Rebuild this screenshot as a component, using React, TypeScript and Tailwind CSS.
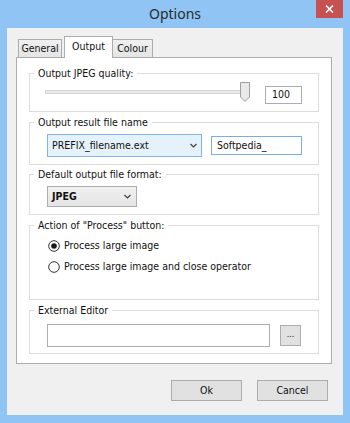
import React from 'react'

const Chevron = () => (
  <svg width="7" height="5" viewBox="0 0 7 5">
    <path d="M0.5 1L3.5 4L6.5 1" fill="none" stroke="#404040" strokeWidth="1.2" />
  </svg>
)

const Radio = ({ checked }: { checked?: boolean }) => (
  <svg width="12" height="12" viewBox="0 0 12 12">
    <circle cx="6" cy="6" r="5.3" fill="#fff" stroke="#333" strokeWidth="1" />
    {checked && <circle cx="6" cy="6" r="2.8" fill="#1a1a1a" />}
  </svg>
)

const Group = ({
  label,
  className,
  children,
}: {
  label: string
  className?: string
  children?: React.ReactNode
}) => (
  <fieldset className={`border border-[#dcdcdc] ${className ?? ''}`}>
    <legend className="ml-[4px] px-[4px] leading-[14px]">{label}</legend>
    {children}
  </fieldset>
)

export default function App() {
  return (
    <div className="w-[350px] h-[423px] bg-[#8fc4f4] flex flex-col font-['DejaVu_Sans_Condensed','Liberation_Sans',Arial,sans-serif] text-[10.5px] text-[#111]">
      {/* title bar */}
      <div className="h-[28px] relative flex items-center justify-center">
        <span className="font-['Noto_Sans',sans-serif] text-[14px] text-[#2b2b2b] leading-none">
          Options
        </span>
        <div className="absolute right-[7px] top-0 w-[27px] h-[18px] bg-[#c75050] flex items-center justify-center">
          <svg width="9" height="8" viewBox="0 0 9 8">
            <path d="M1 0.5L8 7.5M8 0.5L1 7.5" stroke="#fff" strokeWidth="1.6" />
          </svg>
        </div>
      </div>

      {/* client area */}
      <div className="mx-[7px] h-[387px] bg-[#f0f0f0] flex flex-col">
        <div className="flex items-end h-[21px] mt-[8px] ml-[9px]">
          <div className="ml-[2px] w-[44px] h-[18px] border border-b-0 border-[#acacac] bg-gradient-to-b from-[#f0f0f0] to-[#e5e5e5] flex items-center justify-center">
            General
          </div>
          <div className="relative z-10 ml-[2px] -mb-[1px] w-[49px] h-[22px] border border-b-0 border-[#acacac] bg-white flex items-center justify-center pb-[2px]">
            Output
          </div>
          <div className="-ml-[1px] w-[41px] h-[18px] border border-b-0 border-[#acacac] bg-gradient-to-b from-[#f0f0f0] to-[#e5e5e5] flex items-center justify-center">
            Colour
          </div>
        </div>

        <div className="ml-[9px] w-[316px] h-[307px] bg-white border border-[#acacac] px-[12px] pt-[8px] flex flex-col">
          <Group label="Output JPEG quality:" className="h-[46px]">
            <div className="flex items-start pl-[15px]">
              <div className="relative w-[205px] h-[20px] mt-[2px]">
                <div className="absolute left-0 right-[4px] top-[8px] h-[4px] bg-[#e7eaea] border border-[#d6d6d6]" />
                <svg className="absolute left-[195px] top-0" width="10" height="20" viewBox="0 0 10 20">
                  <path d="M0.5 0.5H9.5V15L5 19.5L0.5 15Z" fill="#e9e9e9" stroke="#a0a0a0" strokeWidth="1" />
                </svg>
              </div>
              <div className="ml-[15px] mt-[6px] w-[37px] h-[18px] border border-[#abadb3] bg-white flex items-center pl-[6px]">
                100
              </div>
            </div>
          </Group>

          <Group label="Output result file name" className="h-[50px] mt-[3px]">
            <div className="flex items-center pl-[17px] mt-[5px]">
              <div className="w-[155px] h-[23px] border border-[#7eb4ea] bg-[#e5f1fb] flex items-center justify-between pl-[4px] pr-[4px]">
                <span>PREFIX_filename.ext</span>
                <Chevron />
              </div>
              <div className="ml-[9px] w-[91px] h-[19px] border border-[#7aaee3] bg-white flex items-center pl-[5px]">
                Softpedia_
              </div>
            </div>
          </Group>

          <Group label="Default output file format:" className="h-[48px] mt-[2px]">
            <div className="pl-[17px] mt-[5px]">
              <div className="w-[90px] h-[21px] border border-[#acacac] bg-gradient-to-b from-[#f0f0f0] to-[#e5e5e5] flex items-center justify-between pl-[4px] pr-[5px]">
                <span className="font-bold">JPEG</span>
                <Chevron />
              </div>
            </div>
          </Group>

          <Group label={'Action of "Process" button:'} className="h-[82px] mt-[3px]">
            <div className="flex flex-col pl-[18px] mt-[3px]">
              <div className="h-[21px] flex items-center gap-[4px]">
                <Radio checked />
                <span>Process large image</span>
              </div>
              <div className="h-[21px] flex items-center gap-[4px]">
                <Radio />
                <span>Process large image and close operator</span>
              </div>
            </div>
          </Group>

          <Group label="External Editor" className="h-[51px] mt-[3px]">
            <div className="flex items-center pl-[17px] mt-[7px]">
              <div className="w-[223px] h-[23px] border border-[#abadb3] bg-white" />
              <div className="ml-[10px] w-[21px] h-[21px] border border-[#adadad] bg-[#e1e1e1] flex items-center justify-center text-[9px] pb-[2px]">
                ...
              </div>
            </div>
          </Group>
        </div>

        <div className="flex justify-end gap-[15px] pr-[15px] mt-[16px]">
          <div className="w-[71px] h-[21px] border border-[#adadad] bg-[#e1e1e1] flex items-center justify-center">
            Ok
          </div>
          <div className="w-[71px] h-[21px] border border-[#adadad] bg-[#e1e1e1] flex items-center justify-center">
            Cancel
          </div>
        </div>
      </div>
    </div>
  )
}
